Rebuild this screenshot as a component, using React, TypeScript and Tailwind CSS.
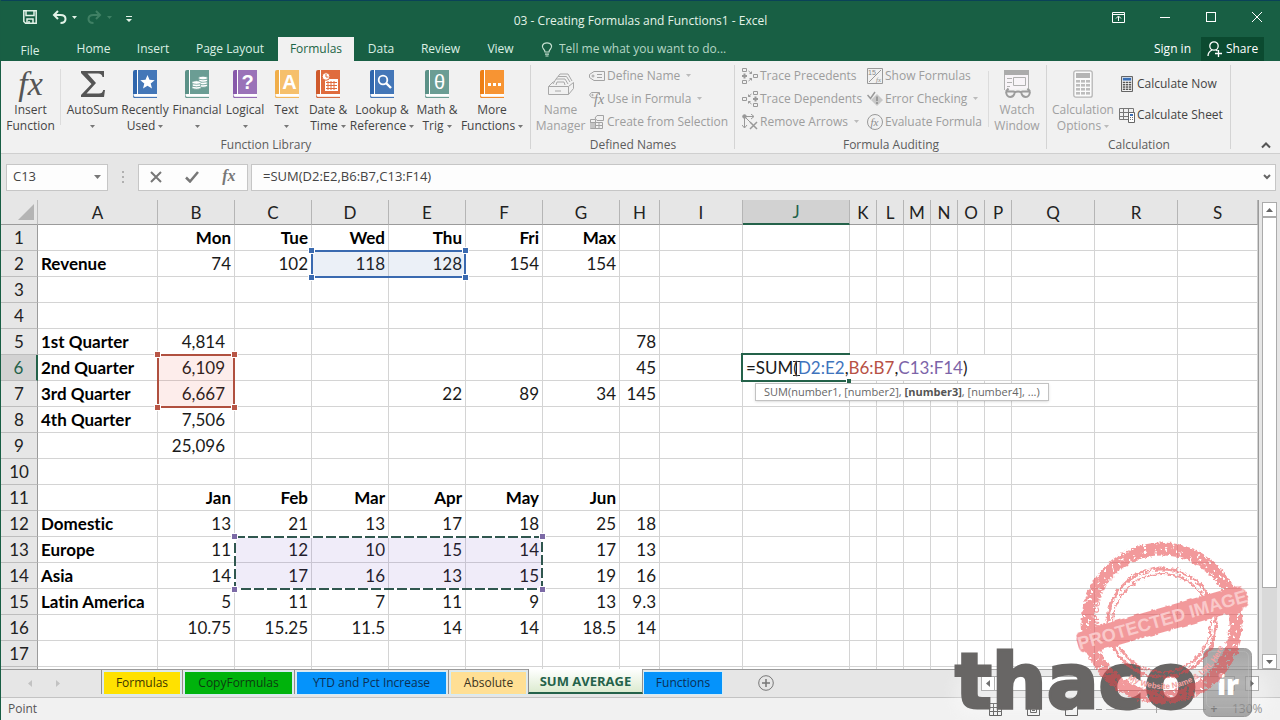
import type { ReactNode } from "react";
import clsx from "clsx";

type Cell = { text: string; bold?: boolean; accounting?: boolean };

const menuTabs = [
  { label: "File", width: "w-[58px] mr-1 pt-0.5" },
  { label: "Home", width: "w-[61px]" },
  { label: "Insert", width: "w-[58px]" },
  { label: "Page Layout", width: "w-[96px]" },
  { label: "Formulas", width: "w-[76px]", active: true },
  { label: "Data", width: "w-[54px]" },
  { label: "Review", width: "w-[65px]" },
  { label: "View", width: "w-[55px]" },
];

const columns = [
  { name: "A", width: "w-[120px]" },
  { name: "B", width: "w-[77px]" },
  { name: "C", width: "w-[77px]" },
  { name: "D", width: "w-[77px]" },
  { name: "E", width: "w-[77px]" },
  { name: "F", width: "w-[77px]" },
  { name: "G", width: "w-[77px]" },
  { name: "H", width: "w-[40px]" },
  { name: "I", width: "w-[83px]" },
  { name: "J", width: "w-[107px]" },
  { name: "K", width: "w-[27px]" },
  { name: "L", width: "w-[27px]" },
  { name: "M", width: "w-[27px]" },
  { name: "N", width: "w-[27px]" },
  { name: "O", width: "w-[27px]" },
  { name: "P", width: "w-[27px]" },
  { name: "Q", width: "w-[83px]" },
  { name: "R", width: "w-[83px]" },
  { name: "S", width: "" },
];

// values per row, starting in column A
const rowValues: Record<number, string[]> = {
  1: ["", "Mon", "Tue", "Wed", "Thu", "Fri", "Max"],
  2: ["Revenue", "74", "102", "118", "128", "154", "154"],
  5: ["1st Quarter", "4,814", "", "", "", "", "", "78"],
  6: ["2nd Quarter", "6,109", "", "", "", "", "", "45"],
  7: ["3rd Quarter", "6,667", "", "", "22", "89", "34", "145"],
  8: ["4th Quarter", "7,506"],
  9: ["", "25,096"],
  11: ["", "Jan", "Feb", "Mar", "Apr", "May", "Jun"],
  12: ["Domestic", "13", "21", "13", "17", "18", "25", "18"],
  13: ["Europe", "11", "12", "10", "15", "14", "17", "13"],
  14: ["Asia", "14", "17", "16", "13", "15", "19", "16"],
  15: ["Latin America", "5", "11", "7", "11", "9", "13", "9.3"],
  16: ["", "10.75", "15.25", "11.5", "14", "14", "18.5", "14"],
};

const lastRow = 17;
const rows = Array.from({ length: lastRow + 1 }, (_, i) => i + 1);

function getCell(row: number, col: number): Cell {
  const text = rowValues[row]?.[col] ?? "";
  return {
    text,
    bold: col === 0 || row === 1 || row === 11,
    accounting: col === 1 && row >= 5 && row <= 9,
  };
}

const sheetTabs = [
  { label: "Formulas", style: "w-[76px] bg-[#ffe100] text-[#3d3600]" },
  { label: "CopyFormulas", style: "w-[107px] bg-[#00b30c] text-[#0c3b10]" },
  { label: "YTD and Pct Increase", style: "w-[149px] bg-[#0593fb] text-[#0b2f55]" },
  { label: "Absolute", style: "w-[75px] bg-[#ffdf94] text-[#3b3220]" },
];

/* ---------- icons ---------- */

function Caret({ className }: { className?: string }) {
  return (
    <svg viewBox="0 0 5 3" className={clsx("inline-block h-[3px] w-[5px] shrink-0", className)}>
      <path d="M0 0h5L2.500 3z" fill="currentColor" />
    </svg>
  );
}

function Book({ color, spine, children }: { color: string; spine: string; children: ReactNode }) {
  return (
    <svg viewBox="0 0 24 28" className="h-7 w-6">
      <path d="M2 0h2v24H2.500Q1 24 0 25V2Q0 0 2 0z" fill={spine} />
      <path d="M0 25Q1 24 3 24H24V28H2Q0 28 0 25z" fill="#fff" />
      <path d="M0 25Q0 27.200 2.500 27.200H24V28H2Q0 28 0 25z" fill={spine} stroke={spine} strokeWidth=".5" />
      <path d="M4 0h1v24H4z" fill="#fff" />
      <path d="M5 0h19v24H5z" fill={color} />
      {children}
    </svg>
  );
}

function BookLetter({ children, light }: { children: string; light?: boolean }) {
  return (
    <text
      x="14.5"
      y="19"
      textAnchor="middle"
      fill="#fff"
      fontSize="20"
      fontWeight={light ? 400 : 700}
      fontFamily="Liberation Sans, sans-serif"
    >
      {children}
    </text>
  );
}

function FxIcon({ className }: { className: string }) {
  return <span className={clsx("font-['Liberation_Serif',serif] italic leading-none", className)}>fx</span>;
}

function SigmaIcon() {
  return (
    <svg viewBox="0 0 26 28" className="h-7 w-[26px]">
      <path d="M1 1H24V7H22.500Q22 3.500 18 3.500H7.500L16 13L6.500 23.500H19Q22.500 23.500 23.200 20H25L24 27H1V25L11.500 14L1 3z" fill="#555" />
    </svg>
  );
}

function NameManagerIcon() {
  return (
    <svg viewBox="0 0 28 28" className="h-7 w-7" fill="none" stroke="#a8a8a8">
      <path d="M1.500 16.500h20v8h-20zM21.500 24.500l5-6v-6l-5 4M1.500 16.500l5-5M6 14l3-5h9l3 5M9 9l2-2.500h8.500L23 12M11 6.500L13 4h8l4 7" />
      <path d="M9 15l1-3h7l1 3M8 21h6" />
    </svg>
  );
}

function TagIcon() {
  return (
    <svg viewBox="0 0 16 16" className="h-4 w-4" fill="none" stroke="#a3a3a3">
      <path d="M5 3.500h10.500v9H5L.5 9.500v-3zM8 6.500h5M8 9.500h5" />
      <circle cx="4" cy="8" r="1" />
    </svg>
  );
}

function TagFxIcon() {
  return (
    <svg viewBox="0 0 16 16" className="h-4 w-4" fill="none" stroke="#a3a3a3">
      <path d="M6 7L2.500 6.500L.5 4l2-2.500H10.500V4" />
      <circle cx="3.500" cy="4" r=".7" />
      <text x="5" y="13" fontSize="14" fontStyle="italic" fontFamily="Liberation Serif, serif" fill="#8c8c8c" stroke="none">
        fx
      </text>
    </svg>
  );
}

function CreateIcon() {
  return (
    <svg viewBox="0 0 16 16" className="h-4 w-4" fill="none" stroke="#a3a3a3">
      <path d="M1.500 5.500h5v3h-5zM1.500 8.500h12v6h-12zM1.500 11.500h12M6.500 8.500v6M10 8.500v6" />
      <path d="M1 9h5v5H1z" fill="#c4c4c4" stroke="none" />
      <path d="M8 1.500h6.500v5H8L6 4z" fill="#f1f1f1" />
    </svg>
  );
}

function TraceIcon({ flip }: { flip?: boolean }) {
  return (
    <svg viewBox="0 0 16 16" className={clsx("h-4 w-4", flip && "-scale-x-100")} fill="none" stroke="#999">
      <path d="M.5.5h4v3h-4zM.5 12.500h4v3h-4zM11.500 6.500h4v3h-4z" />
      <path d="M2.500 5.500v5M0 8h5" strokeWidth="2" />
      <path d="M6.500 3l3 2.500M6.500 13l3-2.500M9.500 3.500v2h-2M9.500 12.500v-2h-2" />
    </svg>
  );
}

function RemoveArrowsIcon() {
  return (
    <svg viewBox="0 0 16 16" className="h-4 w-4" fill="none" stroke="#999">
      <path d="M2.500 2.500h9M9 0l3 2.500L9 5M2.500 2.500v11M0 11l2.500 3L5 11M3 3l6 6" />
      <path d="M8 8l7 7M15 8l-7 7" strokeWidth="1.500" />
      <circle cx="2.500" cy="2.500" r="1.800" fill="#999" />
    </svg>
  );
}

function ShowFormulasIcon() {
  return (
    <svg viewBox="0 0 16 16" className="h-4 w-4" fill="none" stroke="#999">
      <path d="M.5.5h15v15H.5zM2 14L14 2" />
      <text x="1" y="7" fontSize="7" fill="#8a8a8a" stroke="none" fontFamily="Liberation Sans, sans-serif">
        15
      </text>
      <text x="9" y="14" fontSize="7" fontStyle="italic" fill="#8a8a8a" stroke="none" fontFamily="Liberation Serif, serif">
        fx
      </text>
    </svg>
  );
}

function ErrorCheckIcon() {
  return (
    <svg viewBox="0 0 16 16" className="h-4 w-4" fill="none">
      <path d="M10 3l6 6-6 6-6-6z" fill="#c8c8c8" />
      <path d="M10 5.500v4.500M10 11v2" stroke="#8a8a8a" strokeWidth="1.500" />
      <path d="M.5 4l3 3.500L8 1" stroke="#999" strokeWidth="1.500" />
    </svg>
  );
}

function EvaluateIcon() {
  return (
    <svg viewBox="0 0 16 16" className="h-4 w-4" fill="none" stroke="#999">
      <circle cx="8" cy="8" r="7.500" />
      <text x="3.500" y="11.500" fontSize="11" fontStyle="italic" fill="#8a8a8a" stroke="none" fontFamily="Liberation Serif, serif">
        fx
      </text>
    </svg>
  );
}

function WatchIcon() {
  return (
    <svg viewBox="0 0 30 28" className="h-7 w-[30px]" fill="none" stroke="#b0b0b0">
      <path d="M2.500 20V.5h24V18" fill="#f8f4f8" />
      <path d="M2 0h25v5H2z" fill="#ababab" stroke="none" />
      <path d="M5 8.500h5M5 12.500h5M5 16.500h3M11.500 7.500h12v8h-12z" />
      <g stroke="#9c9c9c" strokeWidth="2">
        <path d="M4 21.500h7.500q1.500 0 1 2q-1 3.500-4.300 3.500q-3.700 0-4.200-5.500M28 21.500h-7.500q-1.500 0-1 2q1 3.500 4.300 3.500q3.700 0 4.200-5.500M12.500 22.500q3.500-2 7 0M4 21.500l2.500-3M28 21.500l-2.500-3" />
      </g>
    </svg>
  );
}

function CalculatorIcon({ small }: { small?: boolean }) {
  const frame = small ? "#666" : "#b5b5b5";
  return (
    <svg viewBox="0 0 20 28" className={small ? "h-4 w-3" : "h-7 w-5"} preserveAspectRatio="none">
      <rect x=".8" y=".8" width="18.400" height="26.400" rx="2" fill="#fbfbfb" stroke={frame} strokeWidth={small ? 2 : 1.300} />
      <path d="M3 3h14v5H3z" fill={small ? "#3b6fb5" : "#b5b5b5"} />
      {[10, 14, 18, 22].map((y) =>
        [3, 8, 13].map((x) => <rect key={`${x}-${y}`} x={x} y={y} width="4" height="2.600" fill={small ? "#555" : "#bdbdbd"} />)
      )}
    </svg>
  );
}

function CalcSheetIcon() {
  return (
    <svg viewBox="0 0 16 16" className="h-4 w-4" fill="none" stroke="#777">
      <path d="M.5 1.500h14v11H.5zM.5 5.500h14M.5 9.500h14M4.500 1.500v11M9.500 1.500v11" />
      <path d="M9.500 5.500h6v10h-6z" fill="#fff" stroke="#666" />
      <path d="M11 7h3v2h-3z" fill="#3b6fb5" stroke="none" />
      <path d="M11 10.500h3M11 12.500h3" strokeDasharray="1 1" />
    </svg>
  );
}

/* ---------- ribbon ---------- */

interface BigButtonProps {
  icon: ReactNode;
  lines: [string, string];
  width: string;
  menu?: boolean;
  disabled?: boolean;
}

function BigButton({ icon, lines, width, menu, disabled }: BigButtonProps) {
  return (
    <button
      type="button"
      disabled={disabled}
      className={clsx("flex shrink-0 flex-col items-center whitespace-nowrap", width, disabled ? "text-[#a0a0a0]" : "text-[#444]")}
    >
      <span className="mb-1 flex h-[29px] items-center justify-center">{icon}</span>
      <span className="leading-4">{lines[0]}</span>
      <span className="flex h-4 items-center gap-[3px] leading-4">
        {lines[1]}
        {menu && <Caret className={disabled ? "text-[#bbb]" : "text-[#777]"} />}
      </span>
    </button>
  );
}

function SmallButton({ icon, label, menu, enabled }: { icon: ReactNode; label: string; menu?: boolean; enabled?: boolean }) {
  return (
    <button
      type="button"
      disabled={!enabled}
      className={clsx("flex h-[23px] items-center gap-[2px] whitespace-nowrap", enabled ? "text-[#444]" : "text-[#9d9d9d]")}
    >
      {icon}
      {label}
      {menu && <Caret className="ml-1 text-[#bbb]" />}
    </button>
  );
}

function Group({ label, width, children }: { label: string; width: string; children: ReactNode }) {
  return (
    <section aria-label={label} className={clsx("relative flex shrink-0 flex-col justify-between", width)}>
      <div className="flex h-[73px]">{children}</div>
      <div className="h-4 text-center leading-4 text-[#5c5c5c]">{label}</div>
      <span className="absolute right-0 top-1 h-[84px] w-px bg-[#d4d4d4]" />
    </section>
  );
}

function Ribbon() {
  return (
    <div className="flex h-[93px] shrink-0 overflow-hidden border-b border-[#cfcfcf] bg-[#f1f1f1]">
      <Group label="Function Library" width="w-[530px]">
        <div className="flex pt-2">
          <BigButton icon={<FxIcon className="text-[34px] text-[#555]" />} lines={["Insert", "Function"]} width="w-[59px]" />
          <span className="mr-[6px] h-[56px] w-px bg-[#dcdcdc]" />
          <BigButton icon={<SigmaIcon />} lines={["AutoSum", ""]} width="w-[51px]" menu />
          <BigButton
            icon={
              <Book color="#4477b8" spine="#2f66ad">
                <path d="M14.500 5l2 4.800 5.200.4-4 3.300 1.300 5-4.500-2.700-4.500 2.700 1.300-5-4-3.300 5.200-.4z" fill="#fff" />
              </Book>
            }
            lines={["Recently", "Used"]}
            width="w-[54px]"
            menu
          />
          <BigButton
            icon={
              <Book color="#6b9d94" spine="#5b9187">
                <g fill="#fff" stroke="#6b9d94" strokeWidth=".8">
                  <ellipse cx="18" cy="15.500" rx="4.500" ry="1.800" />
                  <ellipse cx="18" cy="13" rx="4.500" ry="1.800" />
                  <ellipse cx="18" cy="10.500" rx="4.500" ry="1.800" />
                  <ellipse cx="18" cy="8" rx="4.500" ry="1.800" />
                  <ellipse cx="11.500" cy="17.500" rx="4.500" ry="1.800" />
                  <ellipse cx="11.500" cy="15" rx="4.500" ry="1.800" />
                  <ellipse cx="11.500" cy="12.500" rx="4.500" ry="1.800" />
                </g>
              </Book>
            }
            lines={["Financial", ""]}
            width="w-[50px]"
            menu
          />
          <BigButton
            icon={
              <Book color="#9a72b8" spine="#8759aa">
                <BookLetter>?</BookLetter>
              </Book>
            }
            lines={["Logical", ""]}
            width="w-[46px]"
            menu
          />
          <BigButton
            icon={
              <Book color="#f6c06c" spine="#f0ae4a">
                <BookLetter>A</BookLetter>
              </Book>
            }
            lines={["Text", ""]}
            width="w-[37px]"
            menu
          />
          <BigButton
            icon={
              <Book color="#e06c3e" spine="#cf5a2c">
                <path d="M9 9h13v12H9z" fill="#fff" />
                <path d="M10 12.500h11M10 15.500h11M10 18.500h11M12 11v9M15 11v9M18 11v9" stroke="#e06c3e" />
                <circle cx="10" cy="6.500" r="3.800" fill="#fff" stroke="#e06c3e" />
                <path d="M10 4v3h2.500" fill="none" stroke="#e06c3e" />
              </Book>
            }
            lines={["Date &", "Time"]}
            width="w-[46px]"
            menu
          />
          <BigButton
            icon={
              <Book color="#4477b8" spine="#2f66ad">
                <circle cx="13" cy="10" r="4.300" fill="none" stroke="#fff" strokeWidth="1.800" />
                <path d="M16 13l5 5" stroke="#fff" strokeWidth="2.400" />
              </Book>
            }
            lines={["Lookup &", "Reference"]}
            width="w-[62px]"
            menu
          />
          <BigButton
            icon={
              <Book color="#6b9d94" spine="#5b9187">
                <BookLetter light>θ</BookLetter>
              </Book>
            }
            lines={["Math &", "Trig"]}
            width="w-[48px]"
            menu
          />
          <BigButton
            icon={
              <Book color="#f79433" spine="#ee7f14">
                <path d="M8 13h3v3H8zM13 13h3v3h-3zM18 13h3v3h-3z" fill="#fff" />
              </Book>
            }
            lines={["More", "Functions"]}
            width="w-[62px]"
            menu
          />
        </div>
      </Group>

      <Group label="Defined Names" width="w-[204px]">
        <div className="pl-px pt-2">
          <BigButton icon={<NameManagerIcon />} lines={["Name", "Manager"]} width="w-[57px]" disabled />
        </div>
        <div className="flex flex-col pt-[3px]">
          <SmallButton icon={<TagIcon />} label="Define Name" menu />
          <SmallButton icon={<TagFxIcon />} label="Use in Formula" menu />
          <SmallButton icon={<CreateIcon />} label="Create from Selection" />
        </div>
      </Group>

      <Group label="Formula Auditing" width="w-[312px]">
        <div className="flex w-[132px] flex-col pl-[7px] pt-[3px]">
          <SmallButton icon={<TraceIcon />} label="Trace Precedents" />
          <SmallButton icon={<TraceIcon flip />} label="Trace Dependents" />
          <SmallButton icon={<RemoveArrowsIcon />} label="Remove Arrows" menu />
        </div>
        <div className="flex w-[121px] flex-col pt-[3px]">
          <SmallButton icon={<ShowFormulasIcon />} label="Show Formulas" />
          <SmallButton icon={<ErrorCheckIcon />} label="Error Checking" menu />
          <SmallButton icon={<EvaluateIcon />} label="Evaluate Formula" />
        </div>
        <span className="mt-[10px] h-[56px] w-px bg-[#dcdcdc]" />
        <div className="pt-2">
          <BigButton icon={<WatchIcon />} lines={["Watch", "Window"]} width="w-[56px]" disabled />
        </div>
      </Group>

      <Group label="Calculation" width="w-[184px]">
        <div className="pt-2">
          <BigButton icon={<CalculatorIcon />} lines={["Calculation", "Options"]} width="w-[72px]" menu disabled />
        </div>
        <div className="flex flex-col gap-2 pt-[11px]">
          <SmallButton
            icon={
              <span className="flex w-4 justify-center">
                <CalculatorIcon small />
              </span>
            }
            label="Calculate Now"
            enabled
          />
          <SmallButton icon={<CalcSheetIcon />} label="Calculate Sheet" enabled />
        </div>
      </Group>

      <button type="button" aria-label="Collapse ribbon" className="ml-auto mr-[9px] self-end pb-1">
        <svg viewBox="0 0 10 8" className="h-2 w-[10px]" fill="none" stroke="#555" strokeWidth="2">
          <path d="M1 6.500l4-4 4 4" />
        </svg>
      </button>
    </div>
  );
}

/* ---------- header ---------- */

function TitleBar() {
  return (
    <div className="grid h-[37px] grid-cols-[1fr_auto_1fr] items-start border-t border-[#0a4258]">
      <div className="flex h-8 items-center pl-[22px] text-[#e3f3e8]">
        <button type="button" aria-label="Save">
          <svg viewBox="0 0 14 14" className="h-[14px] w-[14px]" fill="none" stroke="currentColor" strokeWidth="1.500">
            <path d="M.8.8h12.400v12.400H2.500L.8 11.500zM3 1v4.500h8V1M4 13V9h6v4M6 11v2" />
          </svg>
        </button>
        <button type="button" aria-label="Undo" className="ml-[15px]">
          <svg viewBox="0 0 15 14" className="h-[14px] w-[15px]" fill="none" stroke="currentColor" strokeWidth="2">
            <path d="M6 1L2 5l4 4M2 5h6.500q5 0 5 4t-5 4" />
          </svg>
        </button>
        <Caret className="ml-[5px]" />
        <button type="button" aria-label="Redo" className="ml-[10px] text-[#3f8064]" disabled>
          <svg viewBox="0 0 15 14" className="h-[14px] w-[15px]" fill="none" stroke="currentColor" strokeWidth="2">
            <path d="M9 1l4 4-4 4M13 5H6.500q-5 0-5 4t5 4" />
          </svg>
        </button>
        <Caret className="ml-[5px] text-[#3f8064]" />
        <button type="button" aria-label="Customize Quick Access Toolbar" className="ml-[14px]">
          <svg viewBox="0 0 6 6" className="mt-1 h-[6px] w-[6px]" fill="currentColor">
            <path d="M0 0h6v1H0zM0 3h6L3 6z" />
          </svg>
        </button>
      </div>
      <h1 className="pt-3 leading-4 text-[#e3f3e8]">03 - Creating Formulas and Functions1 - Excel</h1>
      <div className="flex h-8 justify-end text-white">
        <button type="button" aria-label="Ribbon display options" className="flex w-[47px] items-center justify-center">
          <svg viewBox="0 0 13 11" className="h-[11px] w-[13px]" fill="none" stroke="currentColor">
            <path d="M.5.5h12v10H.5zM.5 2.500h12M6.500 9V4.500M4 6.500l2.500-2.500L9 6.500" />
          </svg>
        </button>
        <button type="button" aria-label="Minimize" className="flex w-[46px] items-center justify-center">
          <span className="h-px w-[10px] bg-white" />
        </button>
        <button type="button" aria-label="Maximize" className="flex w-[46px] items-center justify-center">
          <span className="h-[10px] w-[10px] border border-white" />
        </button>
        <button type="button" aria-label="Close" className="flex w-[46px] items-center justify-center">
          <svg viewBox="0 0 10 10" className="h-[10px] w-[10px]" stroke="currentColor">
            <path d="M0 0l10 10M10 0L0 10" />
          </svg>
        </button>
      </div>
    </div>
  );
}

function MenuBar() {
  return (
    <nav className="flex h-6 text-[#dcefe4]">
      {menuTabs.map((tab) => (
        <button
          key={tab.label}
          type="button"
          className={clsx("shrink-0 text-center leading-6", tab.width, tab.active && "bg-[#f1f1f1] text-[#1d6546]")}
        >
          {tab.label}
        </button>
      ))}
      <label className="ml-[13px] flex flex-1 items-center gap-[6px]">
        <svg viewBox="0 0 12 15" className="h-[15px] w-3 shrink-0" fill="none" stroke="#c5dfd0" strokeWidth="1.200">
          <path d="M4 10Q4 8.500 2.500 7Q1 5.500 1.500 3.500Q2.500.8 6 .8T10.500 3.500Q11 5.500 9.500 7Q8 8.500 8 10zM4 12.200h4M4.500 14h3" />
        </svg>
        <input
          type="text"
          aria-label="Tell me what you want to do"
          placeholder="Tell me what you want to do..."
          className="w-[200px] bg-transparent outline-none placeholder:text-[#b5d6c4]"
        />
      </label>
      <button type="button" className="mr-[10px] text-white">
        Sign in
      </button>
      <button type="button" className="mr-4 flex w-[63px] items-center justify-center gap-1 bg-[#0b4a30] text-white">
        <svg viewBox="0 0 15 16" className="h-4 w-[15px]" fill="none" stroke="currentColor" strokeWidth="1.300">
          <circle cx="7" cy="5" r="4.200" />
          <path d="M1 15q0-4 4-6M9 9l1.500 1M8 12.500h7M11.500 9v7" />
        </svg>
        Share
      </button>
    </nav>
  );
}

function FormulaBar() {
  return (
    <div className="flex h-[46px] shrink-0 items-center bg-[#e6e6e6] pl-[5px] pr-1 text-[13px] text-[#444]">
      <div className="flex h-[27px] w-[102px] items-center border border-[#c6c6c6] bg-[#fdfdfd]">
        <input aria-label="Name box" defaultValue="C13" className="ml-[6px] w-0 flex-1 bg-transparent outline-none" />
        <button type="button" aria-label="Open name list" className="mr-[6px] text-[#777]">
          <svg viewBox="0 0 7 4" className="h-1 w-[7px]">
            <path d="M0 0h7L3.500 4z" fill="currentColor" />
          </svg>
        </button>
      </div>
      <span className="mx-[14px] flex w-[2px] flex-col gap-[3px]">
        <i className="h-[2px] bg-[#b0b0b0]" />
        <i className="h-[2px] bg-[#b0b0b0]" />
        <i className="h-[2px] bg-[#b0b0b0]" />
      </span>
      <div className="flex h-[27px] w-[110px] items-center justify-around border border-[#c6c6c6] bg-[#fdfdfd]">
        <button type="button" aria-label="Cancel">
          <svg viewBox="0 0 12 12" className="h-3 w-3" stroke="#777" strokeWidth="2">
            <path d="M1 1l10 10M11 1L1 11" />
          </svg>
        </button>
        <button type="button" aria-label="Enter">
          <svg viewBox="0 0 14 12" className="h-3 w-[14px]" fill="none" stroke="#777" strokeWidth="2.500">
            <path d="M1 6.500l4 4L13 1" />
          </svg>
        </button>
        <button type="button" aria-label="Insert function">
          <FxIcon className="text-base font-bold text-[#777]" />
        </button>
      </div>
      <div className="ml-[3px] flex h-[27px] flex-1 items-center border border-[#c6c6c6] bg-[#fdfdfd]">
        <input aria-label="Formula bar" defaultValue="=SUM(D2:E2,B6:B7,C13:F14)" className="ml-[11px] flex-1 bg-transparent outline-none" />
        <button type="button" aria-label="Expand formula bar" className="mr-1">
          <svg viewBox="0 0 8 6" className="h-[6px] w-2" fill="none" stroke="#666" strokeWidth="2">
            <path d="M1 1l3 3 3-3" />
          </svg>
        </button>
      </div>
    </div>
  );
}

/* ---------- sheet ---------- */

function Handles({ color }: { color: string }) {
  const base = clsx("absolute h-[7px] w-[7px] border border-white", color);
  return (
    <>
      <i className={clsx(base, "-left-[3px] -top-[3px]")} />
      <i className={clsx(base, "-right-[3px] -top-[3px]")} />
      <i className={clsx(base, "-bottom-[3px] -left-[3px]")} />
      <i className={clsx(base, "-bottom-[3px] -right-[3px]")} />
    </>
  );
}

// Range highlights hang off the top-left cell of their range
function RangeOverlay({ address }: { address: string }) {
  if (address === "D2") {
    return (
      <span className="pointer-events-none absolute -left-px -top-px z-10 h-[28px] w-[155px] bg-[#3d6db5]/10">
        <span className="absolute inset-0 border-2 border-[#3a6ab0]" />
        <Handles color="bg-[#3a6ab0]" />
      </span>
    );
  }
  if (address === "B6") {
    return (
      <span className="pointer-events-none absolute -left-px -top-px z-10 h-[54px] w-[78px] bg-[#f04a3a]/10">
        <span className="absolute inset-0 border-2 border-[#b0503f]" />
        <Handles color="bg-[#b85646]" />
      </span>
    );
  }
  if (address === "C13") {
    return (
      <span className="pointer-events-none absolute -left-px -top-px z-10 h-[54px] w-[309px] bg-[#6b46c1]/10">
        <span className="absolute inset-0 border-2 border-white" />
        <svg className="absolute inset-0 h-full w-full" fill="none">
          <rect x="1" y="1" width="307" height="52" stroke="#30574f" strokeWidth="2" strokeDasharray="10 3" />
        </svg>
        <Handles color="bg-[#7c6aa6]" />
      </span>
    );
  }
  if (address === "J6") {
    return (
      <>
        <span className="absolute left-0 top-0 z-10 flex h-[25px] w-[242px] items-center bg-white pl-[3px] text-left">
          =SUM(<span className="text-[#3f74bd]">D2:E2</span>,<span className="text-[#b75145]">B6:B7</span>,
          <span className="text-[#7c64a8]">C13:F14</span>)
          <svg viewBox="0 0 7 15" className="absolute left-[50px] top-[6px] h-[15px] w-[7px]" fill="none" stroke="#222">
            <path d="M0 .5h2.500l1 1 1-1H7M3.500 1.500v12M0 14.500h2.500l1-1 1 1H7" />
          </svg>
        </span>
        <span className="absolute -left-[2px] -top-[2px] z-10 h-[29px] w-[109px] border-2 border-r-0 border-[#24624a]" />
        <i className="absolute -bottom-[3px] -right-[2px] z-20 h-[5px] w-[5px] border-l border-t border-white bg-[#24624a]" />
        <span className="absolute left-[12px] top-[28px] z-20 whitespace-nowrap border border-[#c2c2c2] bg-white px-2 text-[11px] leading-4 text-[#666] shadow-sm font-['Open_Sans',sans-serif]">
          SUM(number1, [number2], <b className="text-[#555]">[number3]</b>, [number4], ...)
        </span>
      </>
    );
  }
  return null;
}

function Sheet() {
  return (
    <div className="flex min-h-0 flex-1 bg-[#e6e6e6]">
      <div className="relative min-w-0 flex-1 overflow-hidden border-r border-[#9b9b9b]">
        <table className="w-full table-fixed border-separate border-spacing-0 text-[17px] leading-[25px] text-[#1a1a1a] font-['Lato',sans-serif] [font-variant-ligatures:none]">
          <colgroup>
            <col className="w-[37px]" />
            {columns.map((col) => (
              <col key={col.name} className={col.width} />
            ))}
          </colgroup>
          <thead>
            <tr className="h-[25px]">
              <th className="border-b border-r border-[#9b9b9b] border-r-[#bdbdbd] p-0">
                <svg viewBox="0 0 16 16" className="ml-auto mr-[3px] h-4 w-4">
                  <path d="M16 0v16H0z" fill="#b4b4b4" />
                </svg>
              </th>
              {columns.map((col) => (
                <th
                  key={col.name}
                  className={clsx(
                    "h-[25px] border-r border-r-[#b5b5b5] p-0 font-normal leading-[23px]",
                    col.name === "J" ? "border-b-2 border-b-[#24624a] bg-[#d2d2d2] text-[#24624a]" : "border-b border-b-[#9b9b9b] text-[#222]"
                  )}
                >
                  {col.name}
                </th>
              ))}
            </tr>
          </thead>
          <tbody>
            {rows.map((row) => (
              <tr key={row} className="h-[26px]">
                <th
                  className={clsx(
                    "border-b border-b-[#bdbdbd] p-0 font-normal",
                    row === 6 ? "border-r-2 border-r-[#24624a] bg-[#d2d2d2] text-[#24624a]" : "border-r border-r-[#9b9b9b] text-[#222]"
                  )}
                >
                  {row <= lastRow && row}
                </th>
                {columns.map((col, i) => {
                  const cell = getCell(row, i);
                  return (
                    <td
                      key={col.name}
                      className={clsx(
                        "relative border-b border-r border-[#d4d4d4] bg-white p-0 whitespace-nowrap",
                        i === 0 ? "pl-[3px] text-left" : "text-right",
                        i > 0 && (cell.accounting ? "pr-[9px]" : "pr-[3px]"),
                        cell.bold && "font-bold text-black"
                      )}
                    >
                      {cell.text}
                      <RangeOverlay address={`${col.name}${row}`} />
                    </td>
                  );
                })}
              </tr>
            ))}
          </tbody>
        </table>
      </div>

      {/* Vertical scroll bar */}
      <div className="mx-[3px] mt-[2px] flex w-[15px] flex-col bg-[#d9d9d9]">
        <button type="button" aria-label="Scroll up" className="flex h-[15px] items-center justify-center border border-[#ababab] bg-white">
          <svg viewBox="0 0 7 4" className="h-1 w-[7px]">
            <path d="M0 4h7L3.500 0z" fill="#666" />
          </svg>
        </button>
        <div className="flex-[372] border border-[#ababab] bg-white" />
        <div className="flex-[66]" />
        <button type="button" aria-label="Scroll down" className="flex h-[15px] items-center justify-center border border-[#ababab] bg-white">
          <svg viewBox="0 0 7 4" className="h-1 w-[7px]">
            <path d="M0 0h7L3.500 4z" fill="#666" />
          </svg>
        </button>
      </div>
    </div>
  );
}

function SheetTabs() {
  return (
    <div className="flex h-7 shrink-0 items-start border-t border-[#9b9b9b] bg-[#e6e6e6]">
      <div className="flex h-full w-[100px] items-center gap-[24px] pl-[27px] text-[#c2c2c2]">
        <button type="button" aria-label="Previous sheet">
          <svg viewBox="0 0 4 7" className="h-[7px] w-1">
            <path d="M4 0v7L0 3.500z" fill="currentColor" />
          </svg>
        </button>
        <button type="button" aria-label="Next sheet">
          <svg viewBox="0 0 4 7" className="h-[7px] w-1">
            <path d="M0 0v7l4-3.500z" fill="currentColor" />
          </svg>
        </button>
      </div>
      {sheetTabs.map((tab) => (
        <div key={tab.label} className="flex border-l border-[#8f8f8f] px-[2px] pt-[2px]">
          <button type="button" className={clsx("h-[22px] whitespace-nowrap leading-[22px] outline outline-[#d5ecf5]", tab.style)}>
            {tab.label}
          </button>
        </div>
      ))}
      <button
        type="button"
        className="-mt-px h-[25px] w-[115px] border-x border-b-2 border-[#8f8f8f] border-b-[#24624a] bg-linear-to-b from-white to-[#dcebd0] text-[13px] font-bold leading-[24px] text-[#24624a] whitespace-nowrap"
      >
        SUM AVERAGE
      </button>
      <button type="button" className="ml-px mt-[2px] h-[22px] w-[78px] bg-[#0593fb] leading-[22px] text-[#0b2f55] outline outline-[#d5ecf5]">
        Functions
      </button>
      <button type="button" aria-label="New sheet" className="ml-[36px] mt-[5px]">
        <svg viewBox="0 0 16 16" className="h-4 w-4" fill="none" stroke="#777">
          <circle cx="8" cy="8" r="7.300" />
          <path d="M8 4v8M4 8h8" strokeWidth="1.500" />
        </svg>
      </button>
      <div className="ml-auto mr-[21px] mt-[6px] flex h-[15px] w-[278px] bg-[#dadada] text-[#333]">
        <button type="button" aria-label="Scroll left" className="flex w-[14px] items-center justify-center border border-[#8f8f8f] bg-white">
          <svg viewBox="0 0 4 7" className="h-[7px] w-1">
            <path d="M4 0v7L0 3.500z" fill="currentColor" />
          </svg>
        </button>
        <div className="w-[240px] border border-l-0 border-[#8f8f8f] bg-white" />
        <button type="button" aria-label="Scroll right" className="ml-auto flex w-[14px] items-center justify-center border border-[#8f8f8f] bg-white">
          <svg viewBox="0 0 4 7" className="h-[7px] w-1">
            <path d="M0 0v7l4-3.500z" fill="currentColor" />
          </svg>
        </button>
      </div>
    </div>
  );
}

function StatusBar() {
  return (
    <footer className="flex h-[23px] shrink-0 items-center border-t border-[#c3c3c3] bg-[#f1f1f1] pl-[7px] pr-5 text-[#555]">
      Point
      <div className="ml-auto flex items-center text-[#444]">
        <button type="button" aria-label="Normal view">
          <svg viewBox="0 0 13 13" className="h-[13px] w-[13px]" fill="none" stroke="currentColor">
            <path d="M.5.5h12v12H.5zM.5 4.500h12M.5 8.500h12M4.500.5v12M8.500.5v12" />
          </svg>
        </button>
        <button type="button" aria-label="Page layout view" className="ml-[25px]">
          <svg viewBox="0 0 13 13" className="h-[13px] w-[13px]" fill="none" stroke="currentColor">
            <path d="M.5.5h12v12H.5zM3.500 3.500h6v6h-6zM5 5.500h3M5 7.500h3" />
          </svg>
        </button>
        <button type="button" aria-label="Page break view" className="ml-[25px]">
          <svg viewBox="0 0 13 13" className="h-[13px] w-[13px]" fill="none" stroke="currentColor">
            <path d="M.5.5h12v12H.5zM.5 6.500h7v-6" />
          </svg>
        </button>
        <span className="ml-[18px] h-px w-[6px] bg-[#666]" />
        <span className="ml-1 flex h-px w-[100px] items-center justify-center bg-[#aaa]">
          <i className="h-[7px] w-px bg-[#888]" />
        </span>
        <span className="ml-1 w-[8px] text-center font-bold">+</span>
        <span className="ml-[14px] w-[28px] text-[#777]">130%</span>
      </div>
    </footer>
  );
}

/* ---------- watermark ---------- */

function Watermark() {
  return (
    <svg viewBox="0 0 340 190" className="pointer-events-none absolute bottom-0 right-0 z-30 h-[190px] w-[340px] overflow-visible">
      <defs>
        <filter id="rough" x="-10%" y="-10%" width="120%" height="120%">
          <feTurbulence type="fractalNoise" baseFrequency="0.28" numOctaves="2" seed="4" result="noise" />
          <feDisplacementMap in="SourceGraphic" in2="noise" xChannelSelector="R" yChannelSelector="G" scale="6" result="edge" />
          <feColorMatrix in="noise" type="matrix" values="0 0 0 0 0  0 0 0 0 0  0 0 0 0 0  0 0 0 -14 9.800" result="holes" />
          <feComposite in="edge" in2="holes" operator="in" />
        </filter>
        <filter id="ragged" x="-5%" y="-20%" width="110%" height="140%">
          <feTurbulence type="fractalNoise" baseFrequency="0.2" numOctaves="2" seed="9" result="noise" />
          <feDisplacementMap in="SourceGraphic" in2="noise" xChannelSelector="R" yChannelSelector="G" scale="4" />
        </filter>
        <filter id="glow" x="-10%" y="-40%" width="120%" height="180%">
          <feGaussianBlur stdDeviation="7" />
        </filter>
        <linearGradient id="keycap" x1="0" y1="0" x2="0" y2="1">
          <stop offset="0" stopColor="#757575" />
          <stop offset=".5" stopColor="#989898" />
          <stop offset="1" stopColor="#7c7c7c" />
        </linearGradient>
        <path id="arc-top" d="M160 98A62 62 0 0 1 282 73" />
        <path id="arc-bottom" d="M188 149A65 65 0 0 0 285 112" />
      </defs>

      <rect x="14" y="140" width="316" height="46" rx="20" fill="#fff" opacity=".3" filter="url(#glow)" />

      <text x="15" y="178" fontSize="77" fontWeight="700" fontFamily="DejaVu Sans, sans-serif" fill="#686665" stroke="#686665" strokeWidth="3">
        thaco
      </text>

      <rect x="263.500" y="118.500" width="48" height="68" rx="7" fill="url(#keycap)" stroke="#666" opacity=".65" />
      <rect x="266.500" y="121.500" width="42" height="56" rx="5" fill="none" stroke="#c4c4c4" opacity=".4" />
      <text x="277" y="165" fontSize="28" fontWeight="800" fontFamily="Open Sans, sans-serif" fill="#fff">
        ir
      </text>

      <g opacity=".55" fill="none" stroke="#e8474b">
        <g filter="url(#rough)">
          <circle cx="222" cy="93" r="74" strokeWidth="13" />
          <circle cx="222" cy="93" r="54" strokeWidth="3" />
          <circle cx="222" cy="93" r="49" strokeWidth="2" />
        </g>
        <g fill="#e8474b" stroke="none">
          <text fontSize="8" fontWeight="700" fontFamily="Liberation Sans, sans-serif">
            <textPath href="#arc-top">WP CONTENT COPY PROTECTION PLUGIN</textPath>
          </text>
          <rect x="134" y="78" width="176" height="24" rx="9" transform="rotate(-16 222 89)" filter="url(#ragged)" />
        </g>
      </g>
      <text fontSize="8" fontWeight="700" fontFamily="Liberation Sans, sans-serif" fill="#f4a0a0">
        <textPath href="#arc-bottom">My Website Name &amp; URL Here</textPath>
      </text>
      <text
        x="222"
        y="96"
        transform="rotate(-16 222 89)"
        textAnchor="middle"
        fontSize="18"
        fontWeight="700"
        fontFamily="Liberation Sans, sans-serif"
        fill="#f9c9ca"
      >
        PROTECTED IMAGE
      </text>
    </svg>
  );
}

export default function App() {
  return (
    <div className="relative flex h-screen flex-col overflow-hidden border-l border-[#185e44] bg-[#e6e6e6] text-xs font-['Open_Sans',sans-serif]">
      <header className="shrink-0 bg-[#185f44]">
        <TitleBar />
        <MenuBar />
      </header>
      <Ribbon />
      <FormulaBar />
      <Sheet />
      <SheetTabs />
      <StatusBar />
      <Watermark />
    </div>
  );
}
